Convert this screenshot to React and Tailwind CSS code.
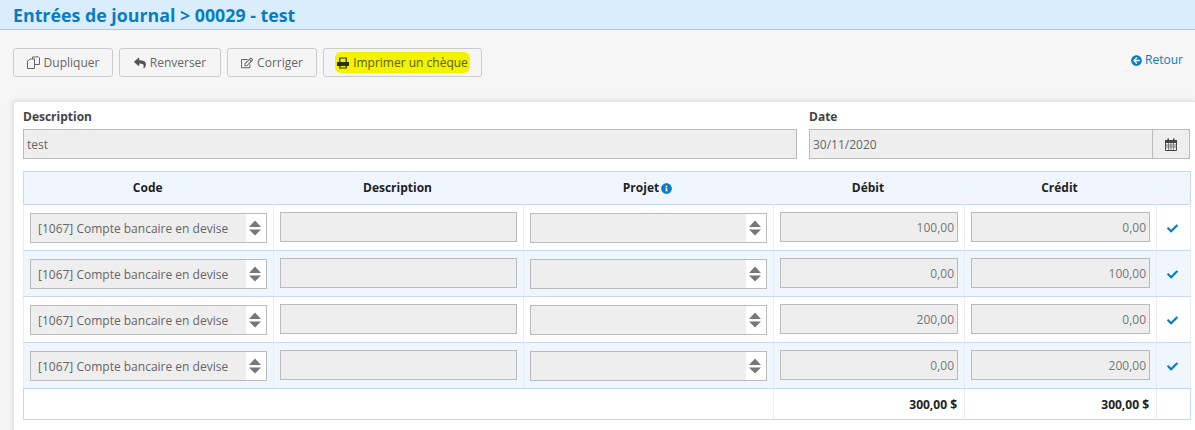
import React from "react";
import { FaReply, FaRegEdit, FaArrowCircleLeft, FaInfoCircle, FaCheck } from "react-icons/fa";

const font = { fontFamily: '"Open Sans", sans-serif' };

function CopyIcon() {
  return (
    <svg width="13" height="13" viewBox="0 0 13 13" fill="none" stroke="#666666" strokeWidth="1" className="block">
      <path d="M5.5 4.5 V1 H9 L11 0.5 L12.5 2 V8.5 H8" />
      <path d="M0.5 5 L3.5 3 H7.5 V12.5 H0.5 Z" fill="#f5f5f5" />
    </svg>
  );
}

function PrintIcon() {
  return (
    <svg width="12" height="12" viewBox="0 0 12 12" className="block">
      <path d="M2.8 5 V1 H9.2 V5 M2.8 9 V11 H9.2 V9" fill="none" stroke="#2d2d00" strokeWidth="1.2" />
      <path d="M0 5 H12 V9 H0 Z" fill="#2d2d00" />
    </svg>
  );
}

function CalendarIcon() {
  return (
    <svg width="12" height="13" viewBox="0 0 12 13" className="block">
      <path d="M0.5 2.5 H11.5 V12.5 H0.5 Z" fill="none" stroke="#444444" />
      <path d="M0 2 H12 V5 H0 Z" fill="#444444" />
      <path d="M2.5 0.5 H4 V3 H2.5 Z M8 0.5 H9.5 V3 H8 Z" fill="#444444" />
      <path d="M0.5 7 H11.5 M0.5 9 H11.5 M3.5 5 V12 M6 5 V12 M8.5 5 V12" stroke="#666666" strokeWidth="0.8" />
    </svg>
  );
}

function Btn({ icon, children, w, hl }) {
  return (
    <button className={`relative h-[29px] ${w} rounded-[3px] border border-[#cccccc] bg-[#f5f5f5] text-[12px] text-[#666666] flex items-center justify-center gap-[4px]`}>
      {hl ? (
        <span className="flex items-center gap-[4px] bg-[#f3f300] h-[21px] pl-[2px] pr-[2px] rounded-[6px] text-[#5c5c00]">
          {icon}
          {children}
        </span>
      ) : (
        <>
          {icon}
          {children}
        </>
      )}
    </button>
  );
}

function SortArrows() {
  return (
    <svg width="12" height="16" viewBox="0 0 12 16" className="block">
      <path d="M6 0.5 L12 7 H0 Z" fill="#777777" />
      <path d="M0 9.5 H12 L6 15.5 Z" fill="#777777" />
    </svg>
  );
}

function Select({ text }) {
  return (
    <div className="h-[30px] border border-[#bbbbbb] bg-[#eeeeee] flex items-center pl-[7px] text-[12px] text-[#666666] relative">
      <span className="truncate pt-[2px]">{text}</span>
      <span className="ml-auto h-[28px] w-[20px] pr-[2px] bg-white flex items-center justify-center">
        <SortArrows />
      </span>
    </div>
  );
}

function Input({ value }) {
  return (
    <div className="h-[30px] pt-[2px] border border-[#bbbbbb] bg-[#eeeeee] flex items-center justify-end pr-[3px] text-[12px] text-[#777777] -mt-[1px]">
      {value}
    </div>
  );
}

const cell = "border border-[#e8eef8] border-y-[#c9d8f5] px-[6px] align-middle";
const rows = [
  ["100,00", "0,00"],
  ["0,00", "100,00"],
  ["200,00", "0,00"],
  ["0,00", "200,00"],
];

export default function App() {
  return (
    <div style={font} className="w-[1195px] h-[430px] overflow-hidden bg-[#f6f6f6]">
      <div className="h-[30px] bg-[#d9edfd] border-b border-[#a9c9e2] pl-[13px] flex items-center">
        <h1 className="text-[17.8px] leading-[26px] font-bold text-[#0a7cc1]">Entrées de journal &gt; 00029 - test</h1>
      </div>

      <div className="flex pl-[13px] pr-[12px] pt-[18px] h-[71px] items-start">
        <div className="flex gap-[6px]">
          <Btn w="w-[100px]" icon={<CopyIcon />}>Dupliquer</Btn>
          <Btn w="w-[102px]" icon={<FaReply className="text-[12px] text-[#555555]" />}>Renverser</Btn>
          <Btn w="w-[90px]" icon={<FaRegEdit className="text-[12px] text-[#666666]" />}>Corriger</Btn>
          <Btn w="w-[159px]" hl icon={<PrintIcon />}>Imprimer un chèque</Btn>
        </div>
        <a className="ml-auto mt-[3px] flex items-center gap-[3px] text-[12px] text-[#0a7cc1]">
          <FaArrowCircleLeft className="text-[11px]" />
          Retour
        </a>
      </div>

      <div className="ml-[13px] bg-white border-t border-l border-[#e4e4e4] rounded-tl-[3px] shadow-[0_0_6px_rgba(0,0,0,0.12)] pl-[9px] pr-[5px] h-[340px]">
        <div className="flex gap-[12px] pt-[6px]">
          <div className="w-[774px]">
            <label className="block text-[12px] font-bold text-[#444444] leading-[17px] mb-[4px]">Description</label>
            <div className="h-[30px] pt-[1px] border border-[#bbbbbb] bg-[#eeeeee] flex items-center pl-[3px] text-[12px] text-[#666666]">test</div>
          </div>
          <div className="w-[381px]">
            <label className="block text-[12px] font-bold text-[#444444] leading-[17px] mb-[4px]">Date</label>
            <div className="flex h-[30px] border border-[#bbbbbb] bg-[#eeeeee] text-[12px] text-[#666666]">
              <div className="flex-1 flex items-center pl-[3px] pt-[1px]">30/11/2020</div>
              <div className="w-[37px] border-l border-[#bbbbbb] flex items-center justify-center">
                <CalendarIcon />
              </div>
            </div>
          </div>
        </div>

        <table className="mt-[12px] w-[1167px] table-fixed border-collapse text-[12px]">
          <colgroup>
            <col className="w-[250px]" />
            <col className="w-[250px]" />
            <col className="w-[250px]" />
            <col className="w-[191px]" />
            <col className="w-[192px]" />
            <col className="w-[34px]" />
          </colgroup>
          <thead>
            <tr className="h-[33px] bg-[#eff6fe] border border-[#c9d8f5] text-[#222222]">
              <th className="font-bold pr-[2px]">Code</th>
              <th className="font-bold pr-[2px]">Description</th>
              <th className="font-bold pr-[2px]">
                <span className="inline-flex items-center gap-[2px]">
                  Projet <FaInfoCircle className="text-[11px] text-[#0a7cc1]" />
                </span>
              </th>
              <th className="font-bold pr-[2px]">Débit</th>
              <th className="font-bold pr-[2px]">Crédit</th>
              <th></th>
            </tr>
          </thead>
          <tbody>
            {rows.map((r, i) => (
              <tr key={i} className={`h-[46px] ${i % 2 ? "bg-[#eff6fe]" : "bg-white"} border-x border-[#c9d8f5]`}>
                <td className={cell}><Select text="[1067] Compte bancaire en devise" /></td>
                <td className={cell}><Input value="" /></td>
                <td className={cell}><Select text="" /></td>
                <td className={cell}><Input value={r[0]} /></td>
                <td className={cell}><Input value={r[1]} /></td>
                <td className={`${cell} text-center pr-[8px]`}>
                  <FaCheck className="inline-block text-[11px] text-[#0a7cc1]" />
                </td>
              </tr>
            ))}
            <tr className="h-[31px] border border-[#c9d8f5] font-bold text-[#222222] text-right">
              <td colSpan={3} className="border-r border-[#e8eef8]"></td>
              <td className="border-r border-[#e8eef8] pr-[7px] pt-[1px]">300,00 $</td>
              <td className="border-r border-[#e8eef8] pr-[7px] pt-[1px]">300,00 $</td>
              <td></td>
            </tr>
          </tbody>
        </table>
      </div>
    </div>
  );
}
